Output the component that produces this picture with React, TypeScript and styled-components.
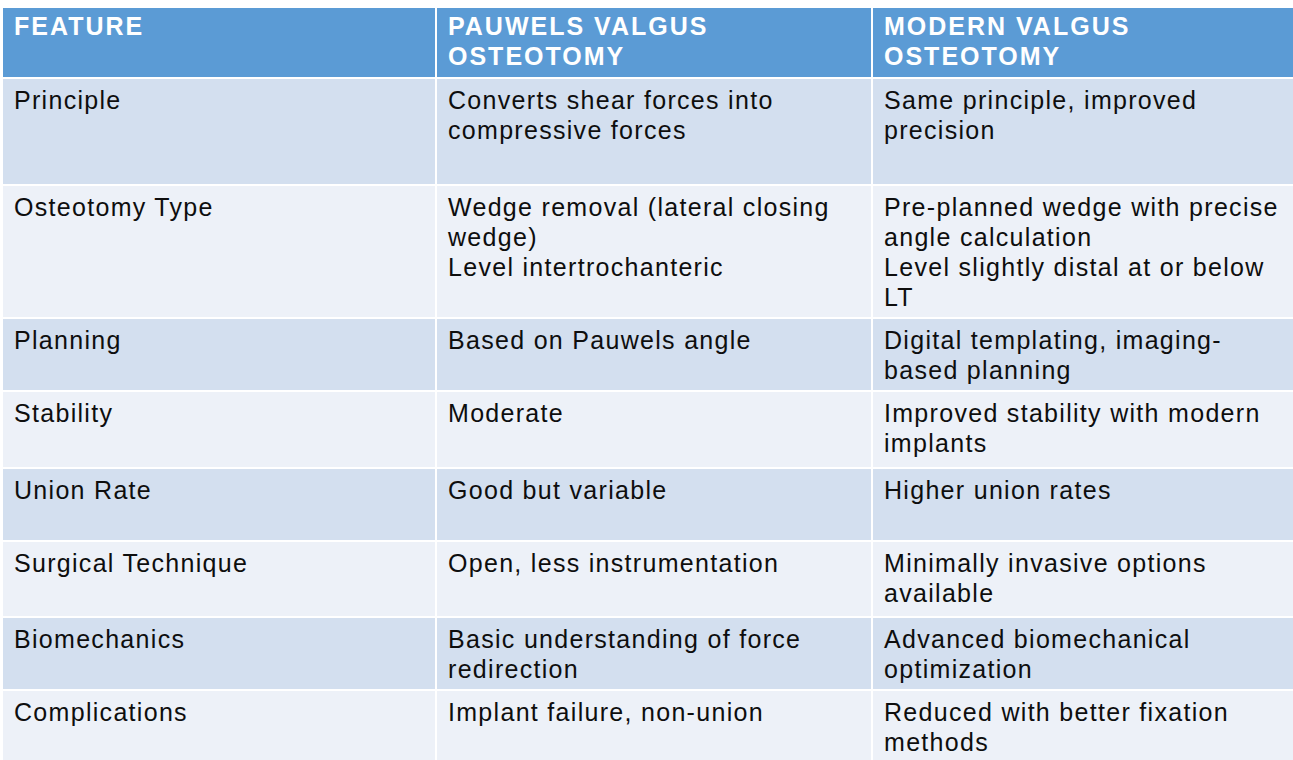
import styled, { createGlobalStyle } from 'styled-components';

const GlobalStyle = createGlobalStyle`
  html, body {
    margin: 0;
    padding: 0;
    background: #ffffff;
    overflow: hidden;
  }
`;

export const Page = styled.div`
  width: 1293px;
  height: 760px;
  padding: 8px 0 0 3px;
  box-sizing: border-box;
  overflow: hidden;
  background: #ffffff;
`;

export const Table = styled.div`
  display: grid;
  grid-template-columns: 432px 434px 430px;
  column-gap: 2px;
  row-gap: 2px;
  background: #ffffff;
  font-family: 'Liberation Sans', Arial, sans-serif;
`;

export const HeadCell = styled.div`
  height: 69px;
  box-sizing: border-box;
  background: #5b9bd5;
  color: #ffffff;
  font-weight: 700;
  font-size: 25px;
  letter-spacing: 2px;
  line-height: 30px;
  padding: 3px 0 0 11px;
  white-space: nowrap;
`;

export const Cell = styled.div<{ $band: boolean; $h: number }>`
  height: ${(p) => p.$h}px;
  box-sizing: border-box;
  background: ${(p) => (p.$band ? '#d3dfef' : '#edf1f8')};
  color: #0e0e0e;
  font-size: 25px;
  letter-spacing: 1.3px;
  line-height: 30px;
  padding: 6px 0 0 11px;
  white-space: nowrap;
`;

export const Line = styled.div`
  display: block;
`;

type Row = { h: number; cells: string[][] };

const header = [['FEATURE'], ['PAUWELS VALGUS', 'OSTEOTOMY'], ['MODERN VALGUS', 'OSTEOTOMY']];

const rows: Row[] = [
  {
    h: 105,
    cells: [
      ['Principle'],
      ['Converts shear forces into', 'compressive forces'],
      ['Same principle, improved', 'precision'],
    ],
  },
  {
    h: 131,
    cells: [
      ['Osteotomy Type'],
      ['Wedge removal (lateral closing', 'wedge)', 'Level intertrochanteric'],
      ['Pre-planned wedge with precise', 'angle calculation', 'Level slightly distal at or below', 'LT'],
    ],
  },
  {
    h: 71,
    cells: [['Planning'], ['Based on Pauwels angle'], ['Digital templating, imaging-', 'based planning']],
  },
  {
    h: 75,
    cells: [['Stability'], ['Moderate'], ['Improved stability with modern', 'implants']],
  },
  {
    h: 71,
    cells: [['Union Rate'], ['Good but variable'], ['Higher union rates']],
  },
  {
    h: 74,
    cells: [['Surgical Technique'], ['Open, less instrumentation'], ['Minimally invasive options', 'available']],
  },
  {
    h: 71,
    cells: [['Biomechanics'], ['Basic understanding of force', 'redirection'], ['Advanced biomechanical', 'optimization']],
  },
  {
    h: 80,
    cells: [['Complications'], ['Implant failure, non-union'], ['Reduced with better fixation', 'methods']],
  },
];

export default function App(): JSX.Element {
  return (
    <Page>
      <GlobalStyle />
      <Table>
        {header.map((lines, i) => (
          <HeadCell key={`h${i}`}>
            {lines.map((l) => (
              <Line key={l}>{l}</Line>
            ))}
          </HeadCell>
        ))}
        {rows.map((row, r) =>
          row.cells.map((lines, c) => (
            <Cell key={`${r}-${c}`} $band={r % 2 === 0} $h={row.h}>
              {lines.map((l) => (
                <Line key={l}>{l}</Line>
              ))}
            </Cell>
          ))
        )}
      </Table>
    </Page>
  );
}
